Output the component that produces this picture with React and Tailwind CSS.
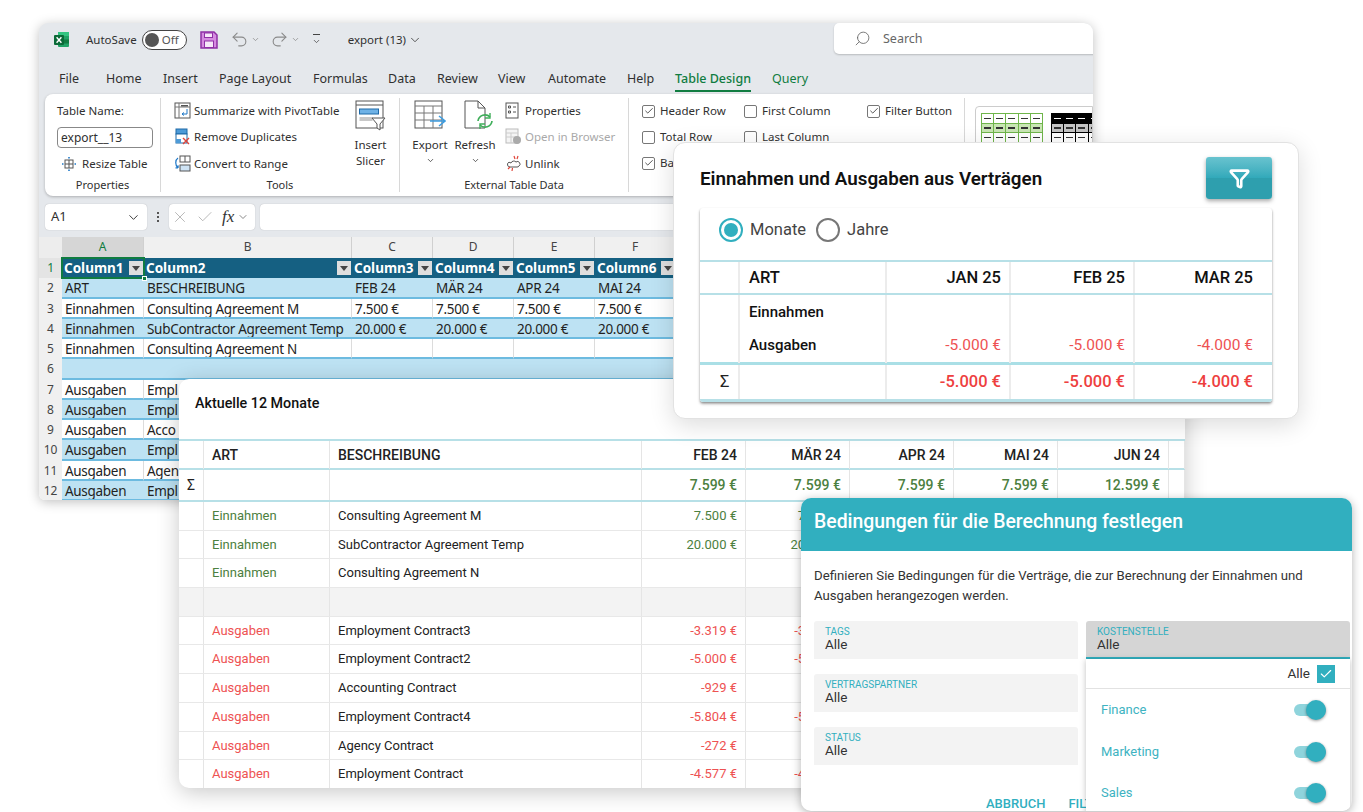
import React from "react";
import { ChevronDown, Search, Undo2, Redo2, Funnel, Check, X } from "lucide-react";

const tabs = [
  ["File", "w-[47px]"], ["Home", "w-[57px]"], ["Insert", "w-[56px]"], ["Page Layout", "w-[94px]"],
  ["Formulas", "w-[75px]"], ["Data", "w-[49px]"], ["Review", "w-[61px]"], ["View", "w-[50px]"],
  ["Automate", "w-[79px]"], ["Help", "w-[48px]"],
];

const sheetRows = [
  ["ART", "BESCHREIBUNG", "FEB 24", "MÄR 24", "APR 24", "MAI 24"],
  ["Einnahmen", "Consulting Agreement M", "7.500 €", "7.500 €", "7.500 €", "7.500 €"],
  ["Einnahmen", "SubContractor Agreement Temp", "20.000 €", "20.000 €", "20.000 €", "20.000 €"],
  ["Einnahmen", "Consulting Agreement N", "", "", "", ""],
  ["", "", "", "", "", ""],
  ["Ausgaben", "Empl", "", "", "", ""],
  ["Ausgaben", "Empl", "", "", "", ""],
  ["Ausgaben", "Acco", "", "", "", ""],
  ["Ausgaben", "Empl", "", "", "", ""],
  ["Ausgaben", "Agen", "", "", "", ""],
  ["Ausgaben", "Empl", "", "", "", ""],
];

const cardRows = [
  ["g", "Einnahmen", "Consulting Agreement M", "7.500 €"],
  ["g", "Einnahmen", "SubContractor Agreement Temp", "20.000 €"],
  ["g", "Einnahmen", "Consulting Agreement N", ""],
  ["e", "", "", ""],
  ["r", "Ausgaben", "Employment Contract3", "-3.319 €"],
  ["r", "Ausgaben", "Employment Contract2", "-5.000 €"],
  ["r", "Ausgaben", "Accounting Contract", "-929 €"],
  ["r", "Ausgaben", "Employment Contract4", "-5.804 €"],
  ["r", "Ausgaben", "Agency Contract", "-272 €"],
  ["r", "Ausgaben", "Employment Contract", "-4.577 €"],
];

function ExcelLogo() {
  return (
    <svg width="17" height="17" viewBox="0 0 17 17">
      <rect x="5" y="1" width="11" height="15" rx="1" fill="#21a366" />
      <rect x="5" y="1" width="11" height="4" fill="#33c481" />
      <rect x="5" y="8.5" width="11" height="4" fill="#107c41" />
      <rect x="1" y="4" width="10" height="10" rx="1" fill="#0b6a38" />
      <path d="M3.6 6.2 L8.4 11.8 M8.4 6.2 L3.6 11.8" stroke="#fff" strokeWidth="1.4" />
    </svg>
  );
}

function SaveIcon() {
  return (
    <svg width="18" height="18" viewBox="0 0 18 18">
      <path d="M1 1 H14 L17 4 V17 H1 Z" fill="#d58be0" stroke="#8e2fa5" strokeWidth="1.5" />
      <rect x="4.5" y="2" width="8" height="4.5" fill="#f6e6f8" stroke="#8e2fa5" />
      <rect x="4.5" y="10" width="9" height="6.5" fill="#f6e6f8" stroke="#8e2fa5" />
    </svg>
  );
}

function PivotIcon() {
  return (
    <svg width="17" height="17" viewBox="0 0 17 17" fill="none">
      <rect x="1" y="1" width="15" height="15" fill="#fff" stroke="#555" />
      <path d="M5 1 V16 M1 5 H16" stroke="#777" />
      <rect x="7" y="3" width="7" height="1.5" fill="#555" />
      <path d="M13 7 V12 H8 M8 12 l2 -1.5 M8 12 l2 1.5" stroke="#1e78c8" />
    </svg>
  );
}

function DupIcon() {
  return (
    <svg width="17" height="17" viewBox="0 0 17 17" fill="none">
      <rect x="2" y="1" width="11" height="5" fill="#4d9bd8" stroke="#1f6aa8" />
      <rect x="2" y="6" width="11" height="9" fill="#fff" stroke="#1f6aa8" />
      <rect x="2" y="11" width="5" height="4" fill="#4d9bd8" />
      <path d="M9 10 L15 16 M15 10 L9 16" stroke="#e0453a" strokeWidth="1.4" />
    </svg>
  );
}

function RangeIcon() {
  return (
    <svg width="17" height="17" viewBox="0 0 17 17" fill="none">
      <rect x="6" y="1" width="10" height="6" fill="#fff" stroke="#555" />
      <path d="M11 1 V7" stroke="#555" />
      <rect x="6" y="10" width="10" height="6" fill="#cfe4f5" stroke="#555" />
      <path d="M4 3 C1 5 1 10 4 13 M4 13 l-2.5 -.2 M4 13 l.2 -2.6" stroke="#1e78c8" strokeWidth="1.2" />
    </svg>
  );
}

function ResizeIcon() {
  return (
    <svg width="16" height="16" viewBox="0 0 16 16" fill="none">
      <rect x="4" y="4" width="8" height="8" stroke="#555" />
      <path d="M8 4 V12 M4 8 H12" stroke="#555" />
      <path d="M8 1 V2.5 M8 13.5 V15 M1 8 H2.5 M13.5 8 H15" stroke="#1e78c8" strokeWidth="1.6" />
    </svg>
  );
}

function SlicerIcon() {
  return (
    <svg width="31" height="31" viewBox="0 0 31 31" fill="none">
      <rect x="1" y="1" width="27" height="27" fill="#fff" stroke="#555" />
      <path d="M1 5 H28" stroke="#555" />
      <rect x="4.5" y="9" width="19" height="5" fill="#6fb2e6" stroke="#1f6aa8" />
      <rect x="4.5" y="17" width="13" height="4" fill="#c8c8c8" />
      <path d="M17 18 H30 L25 24 V30 L22 28 V24 Z" fill="#fff" stroke="#555" />
    </svg>
  );
}

function ExportIcon() {
  return (
    <svg width="32" height="31" viewBox="0 0 32 31" fill="none">
      <rect x="1" y="1" width="27" height="27" fill="#fff" stroke="#555" />
      <path d="M1 6 H28 M1 13 H28 M1 20 H28 M10 6 V28 M19 6 V28" stroke="#777" />
      <path d="M16 21 H30 M25 16 L31 21 L25 26" stroke="#3c9ce0" strokeWidth="1.5" />
    </svg>
  );
}

function RefreshIcon() {
  return (
    <svg width="32" height="31" viewBox="0 0 32 31" fill="none">
      <path d="M2 1 H15 L22 8 V28 H2 Z" fill="#fff" stroke="#555" />
      <path d="M15 1 V8 H22" stroke="#555" />
      <path d="M15 21 a7 7 0 0 1 12 -4 M29 21 a7 7 0 0 1 -12 4" stroke="#3fae5a" strokeWidth="1.7" />
      <path d="M27 13 V18 H22 M17 29 V24 H22" stroke="#3fae5a" strokeWidth="1.4" />
    </svg>
  );
}

function PropsIcon() {
  return (
    <svg width="15" height="17" viewBox="0 0 15 17" fill="none">
      <rect x="1" y="1" width="12" height="15" stroke="#555" fill="#fff" />
      <path d="M3.5 4 h2 v2 h-2 z M3.5 9 h2 v2 h-2 z M8 5 h3 M8 10 h3" stroke="#555" />
    </svg>
  );
}

function BrowserIcon() {
  return (
    <svg width="17" height="17" viewBox="0 0 17 17" fill="none">
      <rect x="1" y="1" width="12" height="14" stroke="#bbb" fill="#f4f4f4" />
      <path d="M1 5 H13 M1 9 H13 M6 5 V15" stroke="#ccc" />
      <circle cx="12" cy="12" r="4" fill="#aaa" />
    </svg>
  );
}

function UnlinkIcon() {
  return (
    <svg width="17" height="17" viewBox="0 0 17 17" fill="none">
      <path d="M6 8 a3 3 0 0 1 5 -1 a2.5 2.5 0 0 1 3 4 a2 2 0 0 1 -2 1 H5 a2.5 2.5 0 0 1 -1 -4.8 Z" stroke="#555" fill="#fff" />
      <path d="M9 1 L10 4 M13 1 L12 4 M3 14 L5 12 M7 16 L7.5 13" stroke="#e0453a" strokeWidth="1.2" />
    </svg>
  );
}

function Thumb({ dark }) {
  const cells = Array.from({ length: 15 });
  return (
    <div className={`grid grid-cols-5 gap-px p-px w-[62px] h-[30px] shrink-0 ${dark ? "bg-black" : "bg-[#6fb54a]"}`}>
      {cells.map((_, i) => (
        <div key={i} className={`flex items-center justify-center ${dark ? (i < 5 ? "bg-black" : i < 10 ? "bg-[#c4c4c4]" : "bg-white") : i >= 5 && i < 10 ? "bg-[#c9e6b4]" : "bg-white"}`}>
          <div className={`w-[7px] h-[1.5px] ${dark && i < 5 ? "bg-white" : "bg-[#333]"}`} />
        </div>
      ))}
    </div>
  );
}

function Tick({ on, label }) {
  return (
    <div className="flex items-center gap-[5px] h-[26px] whitespace-nowrap">
      <span className="w-[13px] h-[13px] rounded-[2px] border border-[#777] bg-white flex items-center justify-center">
        {on && <Check size={10} strokeWidth={2} className="text-[#333]" />}
      </span>
      {label}
    </div>
  );
}

function ToolRow({ icon, text, muted }) {
  return (
    <div className={`flex items-center gap-[3px] h-[26.5px] whitespace-nowrap ${muted ? "text-[#a9a9a9]" : ""}`}>
      <span className="w-[17px] h-[17px] shrink-0 flex">{icon}</span>
      {text}
    </div>
  );
}

function Excel() {
  return (
    <div className="absolute left-[39px] top-[23px] w-[1054px] h-[477px] rounded-t-[9px] rounded-b-[6px] bg-[#e5e8ec] overflow-hidden shadow-[0_2px_12px_rgba(0,0,0,0.25)] font-['Noto_Sans',sans-serif] text-[#303030] text-[12px]">
      {/* title bar */}
      <div className="flex items-center h-[33px] pl-[14px] relative">
        <ExcelLogo />
        <span className="ml-[16px] text-[11.5px]">AutoSave</span>
        <div className="ml-[5px] w-[45px] h-[20px] rounded-full border-[1.5px] border-[#444] bg-white flex items-center pl-[2px] gap-[3px] text-[11.5px] text-[#555]">
          <span className="w-[14px] h-[14px] rounded-full bg-[#555]" />
          Off
        </div>
        <span className="ml-[13px] flex"><SaveIcon /></span>
        <Undo2 size={19} strokeWidth={1.4} className="ml-[12px] text-[#8a8a8a]" />
        <ChevronDown size={9} className="ml-[2px] text-[#8a8a8a]" />
        <Redo2 size={19} strokeWidth={1.4} className="ml-[10px] text-[#8a8a8a]" />
        <ChevronDown size={9} className="ml-[2px] text-[#8a8a8a]" />
        <div className="ml-[12px] flex flex-col items-center gap-[2px] w-[10px]">
          <span className="w-[7px] h-px bg-[#444]" />
          <ChevronDown size={9} strokeWidth={2} className="text-[#444]" />
        </div>
        <span className="ml-[26px] text-[11.5px] whitespace-nowrap">export (13)</span>
        <ChevronDown size={14} strokeWidth={1.5} className="ml-[2px] text-[#444]" />
        <div className="absolute left-[795px] top-0 w-[262px] h-[31px] rounded-l-[5px] bg-white shadow-[0_1px_2px_rgba(0,0,0,0.2)] flex items-center pl-[20px] gap-[12px] text-[#666] text-[12.5px]">
          <Search size={17} strokeWidth={1.2} className="-scale-x-100" />
          <span className="pt-[2px]">Search</span>
        </div>
      </div>
      {/* tabs */}
      <div className="flex items-start h-[38px] pl-[20px] pt-[14px] text-[12.5px] whitespace-nowrap">
        {tabs.map(([t, w]) => (
          <span key={t} className={w}>{t}</span>
        ))}
        <span className="w-[97px] relative text-[#107c41] font-medium">
          Table Design
          <span className="absolute left-0 top-[20px] w-[76px] h-[2px] bg-[#107c41]" />
        </span>
        <span className="text-[#107c41]">Query</span>
      </div>
      {/* ribbon */}
      <div className="ml-[6px] h-[102px] rounded-l-[8px] bg-white shadow-[0_1px_3px_rgba(0,0,0,0.25)] flex text-[11.5px] whitespace-nowrap">
        <div className="w-[116px] flex flex-col items-start pl-[12px] pt-[3px] border-r border-[#d8d8d8] my-[4px] h-[94px] relative">
          <div className="h-[20px] flex items-center">Table Name:</div>
          <div className="mt-[6px] w-[96px] h-[21px] rounded-[4px] border border-[#888] px-[3px] flex items-center text-[12px]">export__13</div>
          <div className="mt-[5px] h-[22px] flex items-center gap-[5px] pl-[4px]"><ResizeIcon />Resize Table</div>
          <div className="absolute left-0 right-0 bottom-[-1px] text-center text-[11px]">Properties</div>
        </div>
        <div className="w-[239px] flex pl-[13px] border-r border-[#d8d8d8] my-[4px] h-[94px] relative">
          <div className="flex flex-col w-[181px] -mt-[1px]">
            <ToolRow icon={<PivotIcon />} text="Summarize with PivotTable" />
            <ToolRow icon={<DupIcon />} text="Remove Duplicates" />
            <ToolRow icon={<RangeIcon />} text="Convert to Range" />
          </div>
          <div className="flex flex-col items-center w-[31px] pt-[2px] leading-[16px]">
            <SlicerIcon />
            <span className="mt-[6px]">Insert</span>
            <span>Slicer</span>
          </div>
          <div className="absolute left-0 right-0 bottom-[-1px] text-center text-[11px]">Tools</div>
        </div>
        <div className="w-[229px] flex pl-[14px] border-r border-[#d8d8d8] my-[4px] h-[94px] relative">
          <div className="flex flex-col items-center w-[32px] pt-[2px] leading-[16px]">
            <ExportIcon />
            <span className="mt-[6px]">Export</span>
            <ChevronDown size={9} strokeWidth={2} className="mt-[3px]" />
          </div>
          <div className="flex flex-col items-center w-[40px] ml-[9px] pt-[2px] leading-[16px]">
            <span className="self-end flex"><RefreshIcon /></span>
            <span className="mt-[6px]">Refresh</span>
            <ChevronDown size={9} strokeWidth={2} className="mt-[3px]" />
          </div>
          <div className="flex flex-col ml-[10px] -mt-[1px]">
            <ToolRow icon={<PropsIcon />} text="Properties" />
            <ToolRow icon={<BrowserIcon />} text="Open in Browser" muted />
            <ToolRow icon={<UnlinkIcon />} text="Unlink" />
          </div>
          <div className="absolute left-0 right-0 bottom-[-1px] text-center text-[11px]">External Table Data</div>
        </div>
        <div className="w-[336px] flex pl-[13px] border-r border-[#d8d8d8] my-[4px] h-[94px]">
          <div className="flex flex-col w-[102px]">
            <Tick on label="Header Row" />
            <Tick label="Total Row" />
            <Tick on label="Banded Rows" />
          </div>
          <div className="flex flex-col w-[123px]">
            <Tick label="First Column" />
            <Tick label="Last Column" />
            <Tick label="Banded Columns" />
          </div>
          <div className="flex flex-col">
            <Tick on label="Filter Button" />
          </div>
        </div>
        <div className="ml-[10px] mt-[12px] flex-1 h-[70px] rounded-l-[4px] border border-[#ccc] flex gap-[8px] pl-[5px] pt-[6px] overflow-hidden">
          <Thumb />
          <Thumb dark />
        </div>
      </div>
      {/* formula bar */}
      <div className="flex items-center h-[26px] mt-[8px] pl-[6px]">
        <div className="w-[102px] h-[26px] rounded-[4px] bg-white flex items-center justify-between px-[6px] text-[13px] shadow-[0_0_1px_rgba(0,0,0,0.3)]">
          A1
          <ChevronDown size={15} strokeWidth={1.5} />
        </div>
        <span className="ml-[10px] w-[3px] flex flex-col gap-[2px]">
          <i className="w-[2px] h-[2px] bg-[#555]" /><i className="w-[2px] h-[2px] bg-[#555]" /><i className="w-[2px] h-[2px] bg-[#555]" />
        </span>
        <div className="ml-[9px] w-[86px] h-[26px] rounded-[4px] bg-white flex items-center pl-[2px] shadow-[0_0_1px_rgba(0,0,0,0.3)]">
          <X size={18} strokeWidth={1.1} className="text-[#aaa]" />
          <Check size={18} strokeWidth={1.1} className="ml-[7px] text-[#aaa]" />
          <span className="ml-[8px] font-['Liberation_Serif',serif] italic text-[17px] text-[#333]">fx</span>
          <ChevronDown size={12} className="ml-[3px] text-[#888]" />
        </div>
        <div className="ml-[5px] flex-1 h-[26px] rounded-l-[4px] bg-white shadow-[0_0_1px_rgba(0,0,0,0.3)]" />
      </div>
      {/* sheet */}
      <div className="mt-[7px] bg-white grid grid-cols-[23px_82px_208px_81px_81px_81px_81px_81px_81px_81px_81px_81px] grid-rows-[21px] auto-rows-[20.25px] text-[13.5px] tracking-[-0.3px] whitespace-nowrap leading-[20px] text-[#222]">
        <div className="bg-[#ededed]" />
        {["A", "B", "C", "D", "E", "F", "G", "H", "I", "J", "K"].map((c) => (
          <div key={c} className={`text-center text-[12px] border-r border-[#d0d0d0] ${c === "A" ? "bg-[#d6d6d6] text-[#107c41]" : "bg-[#f0f0f0] text-[#444]"}`}>{c}</div>
        ))}
        <div className="text-center text-[12px] bg-[#e4e4e4] text-[#107c41]">1</div>
        {["Column1", "Column2", "Column3", "Column4", "Column5", "Column6", "", "", "", "", ""].map((c, i) => (
          <div key={i} className={`relative bg-[#156082] text-white font-bold tracking-normal pl-[2px] ${i === 0 ? "outline-2 outline-[#107c41] -outline-offset-1 z-10" : ""}`}>
            {c}
            <span className="absolute right-[1px] top-[3px] w-[14px] h-[14px] bg-[#dedede] flex items-center justify-center">
              <span className="w-0 h-0 border-x-[4px] border-x-transparent border-t-[5px] border-t-[#444]" />
            </span>
            {i === 0 && <span className="absolute right-[-3px] bottom-[-3px] w-[5px] h-[5px] bg-[#107c41] border border-white" />}
          </div>
        ))}
        {sheetRows.map((r, i) => (
          <React.Fragment key={i}>
            <div className="text-center text-[12px] tracking-normal bg-[#f0f0f0] text-[#444]">{i + 2}</div>
            {r.concat(["", "", "", "", ""]).map((c, j) => (
              <div key={j} className={`pl-[3px] overflow-hidden border-b-2 border-[#6dbbe0] ${i % 2 === 0 ? "bg-[#bde2f3]" : "bg-white border-r border-r-[#dcdcdc]"}`}>{c}</div>
            ))}
          </React.Fragment>
        ))}
      </div>
    </div>
  );
}

function Cell({ children, className = "", last }) {
  return <div className={`${last ? "" : "border-r border-[#e5e5e5]"} ${className}`}>{children}</div>;
}

function TableCard() {
  const head = ["FEB 24", "MÄR 24", "APR 24", "MAI 24", "JUN 24"];
  const sums = ["7.599 €", "7.599 €", "7.599 €", "7.599 €", "12.599 €"];
  const cols = "grid grid-cols-[25px_126px_312px_104px_104px_104px_104px_111px_16px]";
  return (
    <div className="absolute left-[179px] top-[379px] w-[1006px] h-[409px] rounded-[10px] bg-white overflow-hidden shadow-[0_4px_22px_rgba(0,0,0,0.22)] font-['Roboto',sans-serif] text-[13px] text-[#222] z-10">
      <div className="h-[60px] pl-[16px] pt-[14px] font-medium text-[14.3px] leading-[20px] text-[#111]">Aktuelle 12 Monate</div>
      <div className={`${cols} h-[31px] border-y-2 border-[#b7e0e7] font-medium text-[14px] leading-[28px]`}>
        <Cell /><Cell className="pl-[8px]">ART</Cell><Cell className="pl-[8px]">BESCHREIBUNG</Cell>
        {head.map((h) => <Cell key={h} className="text-right pr-[8px]">{h}</Cell>)}
        <Cell />
      </div>
      <div className={`${cols} h-[32px] border-b-2 border-[#b7e0e7] font-medium text-[14px] text-[#4c8040] leading-[30px]`}>
        <Cell className="pl-[8px] text-[#222] font-normal">Σ</Cell><Cell /><Cell />
        {sums.map((h, i) => <Cell key={i} className="text-right pr-[8px]">{h}</Cell>)}
        <Cell />
      </div>
      {cardRows.map(([k, art, desc, val], i) => (
        <div key={i} className={`${cols} h-[28.7px] border-b border-[#e8e8e8] leading-[27px] ${k === "e" ? "bg-[#f3f3f3]" : ""}`}>
          <Cell />
          <Cell className={`pl-[8px] ${k === "g" ? "text-[#4c8040]" : "text-[#ee5252]"}`}>{art}</Cell>
          <Cell className="pl-[8px]">{desc}</Cell>
          {[0, 1, 2, 3, 4].map((n) => (
            <Cell key={n} className={`text-right pr-[8px] ${k === "g" ? "text-[#4c8040]" : "text-[#ee5252]"}`}>{n < 2 ? val : ""}</Cell>
          ))}
          <Cell />
        </div>
      ))}
    </div>
  );
}

function SummaryCard() {
  const cols = "grid grid-cols-[40px_147px_124px_124px_1fr]";
  const line = "border-r-2 border-[#ececec]";
  return (
    <div className="absolute left-[673px] top-[142px] w-[626px] h-[277px] rounded-[12px] bg-white border border-[#e2e2e2] shadow-[0_6px_24px_rgba(0,0,0,0.14)] font-['Roboto',sans-serif] text-[#111] z-20 pl-[26px] pr-[26px]">
      <div className="flex items-start justify-between h-[65px] pt-[14px]">
        <span className="text-[18.8px] font-semibold leading-[24px] mt-[10px]">Einnahmen und Ausgaben aus Verträgen</span>
        <div className="w-[66px] h-[42px] rounded-[3px] shadow-[0_2px_4px_rgba(0,0,0,0.35)] bg-linear-to-b from-[#68c3cf] from-0% via-[#31a9ba] via-50% to-[#2e9fae] to-50% flex items-center justify-center">
          <Funnel size={21} strokeWidth={3} className="text-white" />
        </div>
      </div>
      <div className="rounded-[3px] bg-white shadow-[0_1px_2px_rgba(0,0,0,0.2),0_2px_3px_rgba(0,0,0,0.3)] text-[16.5px]">
        <div className="h-[52px] flex items-start pt-[10px] pl-[19px] gap-[7px] text-[#444]">
          <span className="w-[24px] h-[24px] rounded-full border-2 border-[#31afbf] flex items-center justify-center">
            <span className="w-[14px] h-[14px] rounded-full bg-[#31afbf]" />
          </span>
          <span className="leading-[24px] mr-[3px]">Monate</span>
          <span className="w-[24px] h-[24px] rounded-full border-2 border-[#777]" />
          <span className="leading-[24px]">Jahre</span>
        </div>
        <div className={`${cols} h-[35px] border-y-2 border-[#b7e0e7] font-medium leading-[31px]`}>
          <div className={line} />
          <div className={`${line} pl-[9px]`}>ART</div>
          <div className={`${line} text-right pr-[8px]`}>JAN 25</div>
          <div className={`${line} text-right pr-[8px]`}>FEB 25</div>
          <div className="text-right pr-[19px]">MAR 25</div>
        </div>
        <div className={`${cols} h-[33px] text-[15px] font-medium leading-[35px]`}>
          <div className={line} /><div className={`${line} pl-[9px]`}>Einnahmen</div><div className={line} /><div className={line} /><div />
        </div>
        <div className={`${cols} h-[34px] text-[15px] leading-[35px]`}>
          <div className={line} />
          <div className={`${line} pl-[9px] font-medium`}>Ausgaben</div>
          <div className={`${line} text-right pr-[8px] text-[#ee5252] text-[15.5px]`}>-5.000 €</div>
          <div className={`${line} text-right pr-[8px] text-[#ee5252] text-[15.5px]`}>-5.000 €</div>
          <div className="text-right pr-[19px] text-[#ee5252] text-[15.5px]">-4.000 €</div>
        </div>
        <div className={`${cols} h-[40px] border-t-[3px] border-b-[3px] border-t-[#aadfe6] border-b-[#b7e0e7] font-medium leading-[33px] text-[#ee3f3f] rounded-b-[3px]`}>
          <div className={`${line} text-[#222] font-normal pl-[20px]`}>Σ</div>
          <div className={line} />
          <div className={`${line} text-right pr-[8px]`}>-5.000 €</div>
          <div className={`${line} text-right pr-[8px]`}>-5.000 €</div>
          <div className="text-right pr-[19px]">-4.000 €</div>
        </div>
      </div>
    </div>
  );
}

function Field({ label, dark }) {
  return (
    <div className={`h-[38px] rounded-t-[3px] pl-[11px] pt-[5px] leading-none ${dark ? "bg-[#d5d5d5] border-b-2 border-[#31afbf]" : "bg-[#f3f3f3]"}`}>
      <div className="text-[10px] text-[#31afbf] leading-[11px]">{label}</div>
      <div className="text-[13.5px] text-[#333] leading-[15px]">Alle</div>
    </div>
  );
}

function Toggle({ label }) {
  return (
    <div className="h-[41.7px] pl-[15px] pr-[24px] flex items-center justify-between text-[13px] text-[#3eb3c2]">
      {label}
      <div className="relative w-[32px] h-[12px] rounded-full bg-[#8fd4dc]">
        <span className="absolute right-0 top-[-4px] w-[20px] h-[20px] rounded-full bg-[#31afbf] shadow-[0_1px_3px_rgba(0,0,0,0.4)]" />
      </div>
    </div>
  );
}

function Modal() {
  return (
    <div className="absolute left-[801px] top-[498px] w-[551px] h-[313px] rounded-[10px] bg-white overflow-hidden shadow-[0_2px_10px_rgba(0,0,0,0.3)] font-['Roboto',sans-serif] z-30">
      <div className="h-[53px] bg-[#31afbf] text-white font-medium text-[19.4px] pl-[13px] pt-[12px] leading-[24px] whitespace-nowrap">Bedingungen für die Berechnung festlegen</div>
      <div className="pl-[13px] pr-[14px] pt-[15px] text-[13.2px] leading-[19.5px] text-[#333]">
        Definieren Sie Bedingungen für die Verträge, die zur Berechnung der Einnahmen und Ausgaben herangezogen werden.
      </div>
      <div className="flex gap-[8px] pl-[13px] mt-[16px]">
        <div className="w-[264px] flex flex-col gap-[15px]">
          <Field label="TAGS" />
          <Field label="VERTRAGSPARTNER" />
          <Field label="STATUS" />
          <div className="flex pl-[172px] gap-[23px] mt-[14px] text-[13px] font-medium text-[#31afbf] whitespace-nowrap">
            <span>ABBRUCH</span><span>FILTERN</span>
          </div>
        </div>
        <div className="w-[264px] relative z-10">
          <Field label="KOSTENSTELLE" dark />
          <div className="bg-white shadow-[0_1px_6px_rgba(0,0,0,0.25)] h-[160px]">
            <div className="h-[30px] border-b border-[#e2e2e2] flex items-center justify-end pr-[15px] gap-[7px] text-[13.5px] text-[#333]">
              Alle
              <span className="w-[18px] h-[18px] bg-[#31afbf] flex items-center justify-center">
                <Check size={14} strokeWidth={2} className="text-white" />
              </span>
            </div>
            <div>
              <Toggle label="Finance" />
              <Toggle label="Marketing" />
              <Toggle label="Sales" />
            </div>
          </div>
        </div>
      </div>
    </div>
  );
}

export default function App() {
  return (
    <div className="relative w-[1363px] h-[812px] overflow-hidden bg-white">
      <Excel />
      <TableCard />
      <SummaryCard />
      <Modal />
    </div>
  );
}
